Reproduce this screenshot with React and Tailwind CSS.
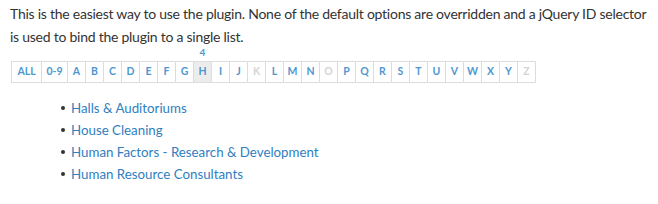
import React from "react";

const letters = [
  { l: "ALL", w: "w-[29px]" },
  { l: "0-9", w: "w-[26px]" },
  ..."ABCDEFGHIJKLMNOPQRSTUVWXYZ".split("").map((l) => ({ l, w: "w-[18px]" })),
];
const disabled = new Set(["K", "O", "Z"]);

export default function App() {
  return (
    <div className="w-[658px] h-[204px] bg-white overflow-hidden" style={{ fontFamily: "Lato, 'Liberation Sans', sans-serif" }}>
      <p className="pl-[10px] pt-[2px] pr-1 text-[14px] tracking-[-0.25px] leading-[23px] text-[#333]">
        This is the easiest way to use the plugin. None of the default options are overridden and a jQuery ID selector is used to bind the plugin to a single list.
      </p>
      <div className="ml-[11px] mt-[13px] flex w-max border border-[#dcdcdc] h-[22px]">
        {letters.map((c, i) => {
          const dis = disabled.has(c.l);
          const sel = c.l === "H";
          return (
            <div
              key={c.l}
              className={`relative ${c.w} flex items-center justify-center text-[10.5px] font-bold ${i > 0 ? "border-l border-[#dcdcdc]" : ""} ${sel ? "bg-[#ececec]" : ""} ${dis ? "text-[#d4d4d4]" : "text-[#4f98cf]"}`}
            >
              {c.l}
              {sel && (
                <span className="absolute -top-[17px] left-0 right-0 text-center text-[10px] font-bold text-[#4f98cf]">4</span>
              )}
            </div>
          );
        })}
      </div>
      <ul className="mt-[14px] pl-[61px] text-[13.3px] leading-[22px] text-[#2f80bf]">
        {["Halls & Auditoriums", "House Cleaning", "Human Factors - Research & Development", "Human Resource Consultants"].map((t) => (
          <li key={t} className="flex items-center">
            <span className="w-[4px] h-[4px] rounded-full bg-[#333] mr-[6px]"></span>
            {t}
          </li>
        ))}
      </ul>
    </div>
  );
}
